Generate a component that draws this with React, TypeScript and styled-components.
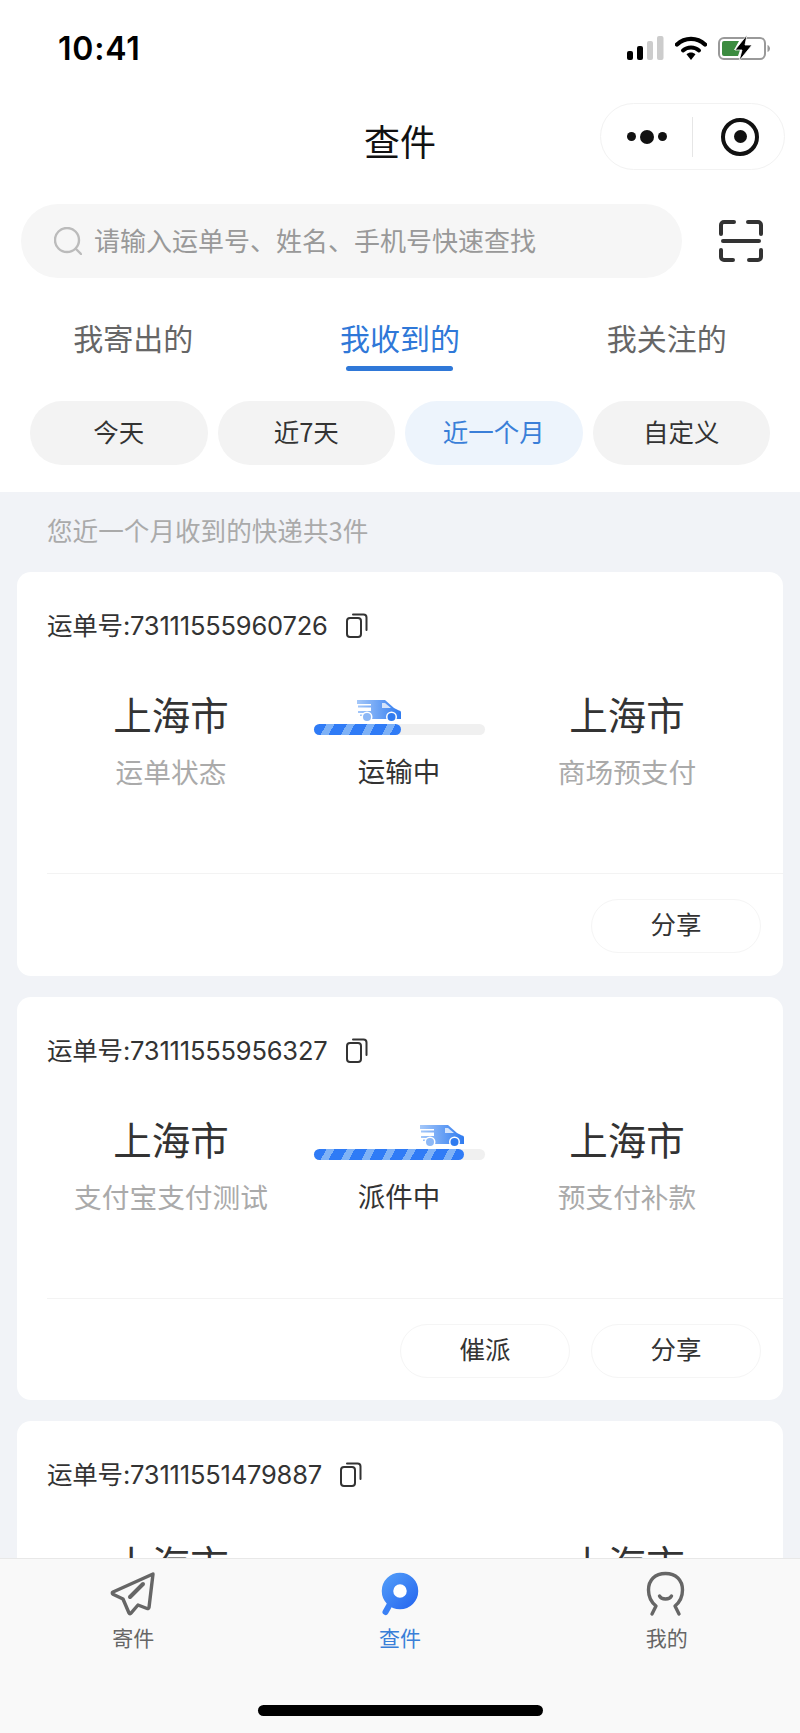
import React from "react";
import styled, { createGlobalStyle } from "styled-components";

interface Waybill {
  no: string;
  from: string;
  fromNote?: string;
  to: string;
  toNote?: string;
  status?: string;
  progress?: number;
  actions?: string[];
}

const waybills: Waybill[] = [
  {
    no: "73111555960726",
    from: "上海市",
    fromNote: "运单状态",
    to: "上海市",
    toNote: "商场预支付",
    status: "运输中",
    progress: 51,
    actions: ["分享"],
  },
  {
    no: "73111555956327",
    from: "上海市",
    fromNote: "支付宝支付测试",
    to: "上海市",
    toNote: "预支付补款",
    status: "派件中",
    progress: 88,
    actions: ["催派", "分享"],
  },
  { no: "73111551479887", from: "上海市", to: "上海市" },
];

const ranges = ["今天", "近7天", "近一个月", "自定义"];
const tabs = ["我寄出的", "我收到的", "我关注的"];

const SignalIcon = () => (
  <svg width="37" height="24" viewBox="0 0 37 24">
    <rect x="0" y="15" width="6" height="9" rx="2" fill="#000" />
    <rect x="10" y="10" width="6" height="14" rx="2" fill="#000" />
    <rect x="20" y="5" width="6" height="19" rx="2" fill="#ccc" />
    <rect x="30" y="0" width="6.5" height="24" rx="2" fill="#ccc" />
  </svg>
);

const WifiIcon = () => (
  <svg width="32" height="24" viewBox="0 0 32 24" fill="none">
    <path d="M2 8.5C10 1 22 1 30 8.5" stroke="#000" strokeWidth="4.4" strokeLinecap="round" />
    <path d="M8 14.5C12.5 10.5 19.5 10.5 24 14.5" stroke="#000" strokeWidth="4" strokeLinecap="round" />
    <path d="M11.5 18.2C14.2 15.8 17.8 15.8 20.5 18.2L16 24Z" fill="#000" />
  </svg>
);

const BatteryIcon = () => (
  <svg width="52" height="26" viewBox="0 0 52 26" fill="none">
    <rect x="1" y="3" width="46" height="21" rx="5" stroke="#999" strokeWidth="2" />
    <path d="M4 8a2 2 0 0 1 2-2h15l-5 9h6l-2 6H6a2 2 0 0 1-2-2Z" fill="#3c8c40" />
    <path d="M49.5 10c1.5.5 2.5 2 2.5 3.5s-1 3-2.5 3.5Z" fill="#999" />
    <path d="M29 0 17 15h7l-3 11 13-16h-7Z" fill="#000" stroke="#fff" strokeWidth=".8" />
  </svg>
);

const ScanIcon = () => (
  <svg width="44" height="42" viewBox="0 0 44 42" fill="none" stroke="#333" strokeWidth="4" strokeLinecap="round">
    <path d="M2 14V5a3 3 0 0 1 3-3h10" />
    <path d="M29 2h10a3 3 0 0 1 3 3v9" />
    <path d="M4 21h36" />
    <path d="M2 30v7a3 3 0 0 0 3 3h9" />
    <path d="M30 40h9a3 3 0 0 0 3-3v-7" />
  </svg>
);

const SearchIcon = () => (
  <svg width="28" height="28" viewBox="0 0 28 28" fill="none" stroke="#bbb" strokeWidth="2.4" strokeLinecap="round">
    <circle cx="13" cy="13" r="12" />
    <path d="M22 22l5 5" />
  </svg>
);

const CopyIcon = () => (
  <svg width="22" height="26" viewBox="0 0 22 26" fill="none" stroke="#333" strokeWidth="2">
    <rect x="1" y="6" width="14" height="19" rx="3" />
    <path d="M7 2.5h10.5a3 3 0 0 1 3 3V18" strokeLinecap="round" />
  </svg>
);

const TruckIcon = () => (
  <svg width="44" height="22" viewBox="0 0 44 22">
    <defs>
      <linearGradient id="truckFill" x1="0" x2="1" y1="0" y2="0">
        <stop offset="0" stopColor="#a5c8f9" />
        <stop offset="1" stopColor="#2f7bf0" />
      </linearGradient>
    </defs>
    <path
      d="M0 0h28l9 8 5 2.500a2 2 0 0 1 2 2V19H8v-3H3v-1.500h10V13H1V11h13V7.500H1V5.500h13V4H0Z"
      fill="url(#truckFill)"
    />
    <path d="M28 3h-3v5h9Z" fill="#d3e3fb" />
    <circle cx="10" cy="17" r="5.500" fill="#fff" />
    <circle cx="10" cy="17" r="4" fill="#8db8f6" />
    <circle cx="34.500" cy="17" r="5.500" fill="#fff" />
    <circle cx="34.500" cy="17" r="4" fill="#2f7bf0" />
  </svg>
);

const PlaneIcon = () => (
  <svg width="46" height="48" viewBox="0 0 46 48" fill="none" stroke="#666" strokeWidth="3.400" strokeLinejoin="round" strokeLinecap="round">
    <path d="M43 4 3 22c-1 .6-1 1.600 0 2.200L13 29l6 14c.5 1 1.500 1 2 .2L28 35l9 3.500c1 .4 1.800 0 2-1Z" />
    <path d="M20 27 33 14" strokeWidth="4" />
  </svg>
);

const FindIcon = () => (
  <svg width="40" height="46" viewBox="0 0 40 46" fill="none">
    <defs>
      <linearGradient id="findFill" x1="0" x2="1" y1="0" y2="1">
        <stop offset="0" stopColor="#4d97f8" />
        <stop offset="1" stopColor="#2b6df0" />
      </linearGradient>
    </defs>
    <path d="M10 33 5.500 41" stroke="#3a80f5" strokeWidth="6" strokeLinecap="round" />
    <circle cx="20" cy="20" r="12" fill="#fff" />
    <circle cx="20" cy="20" r="12.500" stroke="url(#findFill)" strokeWidth="11.500" />
  </svg>
);

const MineIcon = () => (
  <svg width="44" height="46" viewBox="0 0 44 46" fill="none" stroke="#666" strokeWidth="3.400" strokeLinecap="round" strokeLinejoin="round">
    <path d="M7 43l4-8C6 31 3.500 26 3.500 19 3.500 9 10 2.500 20.500 2.500S37.500 9 37.500 19c0 7-2.500 12-7.500 16l4 8" />
    <path d="M14.500 25c2 4 10 4 12 0" />
  </svg>
);

const App: React.FC = () => {
  return (
    <Page>
      <GlobalStyle />
      <StatusBar>
        <Time>10:41</Time>
        <StatusIcons>
          <SignalIcon />
          <WifiIcon />
          <BatteryIcon />
        </StatusIcons>
      </StatusBar>

      <NavBar>
        <Title>查件</Title>
        <Capsule>
          <Dots>
            <Dot />
            <Dot $big />
            <Dot />
          </Dots>
          <CapsuleLine />
          <Target />
        </Capsule>
      </NavBar>

      <SearchRow>
        <SearchBox>
          <SearchIcon />
          <Placeholder>请输入运单号、姓名、手机号快速查找</Placeholder>
        </SearchBox>
        <ScanIcon />
      </SearchRow>

      <Tabs>
        {tabs.map((tab, index) => (
          <Tab key={tab} $active={index === 1}>
            {tab}
          </Tab>
        ))}
      </Tabs>

      <Ranges>
        {ranges.map((range, index) => (
          <Range key={range} $active={index === 2}>
            {range}
          </Range>
        ))}
      </Ranges>

      <Feed>
        <Summary>您近一个月收到的快递共3件</Summary>
        <CardList>
          {waybills.map((item) => (
            <Card key={item.no}>
              <CardHead>
                <WaybillNo>运单号:{item.no}</WaybillNo>
                <CopyIcon />
              </CardHead>
              <Route>
                <Place>
                  <City>{item.from}</City>
                  {item.fromNote && <Note>{item.fromNote}</Note>}
                </Place>
                <Transit>
                  {item.progress !== undefined && (
                    <>
                      <Track>
                        <Fill style={{ width: `${item.progress}%` }}>
                          <TruckSpot>
                            <TruckIcon />
                          </TruckSpot>
                        </Fill>
                      </Track>
                      <Status>{item.status}</Status>
                    </>
                  )}
                </Transit>
                <Place>
                  <City>{item.to}</City>
                  {item.toNote && <Note>{item.toNote}</Note>}
                </Place>
              </Route>
              {item.actions && (
                <CardFoot>
                  {item.actions.map((action) => (
                    <ActionButton key={action}>{action}</ActionButton>
                  ))}
                </CardFoot>
              )}
            </Card>
          ))}
        </CardList>
      </Feed>

      <TabBar>
        <TabBarItems>
          <BarItem>
            <BarIcon>
              <PlaneIcon />
            </BarIcon>
            寄件
          </BarItem>
          <BarItem $active>
            <BarIcon>
              <FindIcon />
            </BarIcon>
            查件
          </BarItem>
          <BarItem>
            <BarIcon>
              <MineIcon />
            </BarIcon>
            我的
          </BarItem>
        </TabBarItems>
        <HomeIndicator />
      </TabBar>
    </Page>
  );
};

export default App;

const GlobalStyle = createGlobalStyle`
  body {
    margin: 0;
    background: #fff;
    font-family: "Noto Sans CJK SC", "Noto Sans", sans-serif;
  }
`;

const Page = styled.div`
  width: 800px;
  height: 1733px;
  display: flex;
  flex-direction: column;
  overflow: hidden;
  background: #fff;
`;

const StatusBar = styled.div`
  height: 96px;
  flex: none;
  display: flex;
  align-items: center;
  justify-content: space-between;
  padding: 0 30px 0 58px;
`;

const Time = styled.span`
  font-family: Inter, sans-serif;
  font-size: 32px;
  font-weight: 600;
  letter-spacing: 0.8px;
  color: #000;
`;

const StatusIcons = styled.div`
  display: flex;
  align-items: center;
  gap: 11px;
`;

const NavBar = styled.div`
  height: 90px;
  flex: none;
  display: grid;
  grid-template-columns: 1fr auto 1fr;
  align-items: center;
`;

const Title = styled.h1`
  grid-column: 2;
  margin: 0 0 2px;
  font-size: 36px;
  font-weight: 400;
  line-height: 50px;
  color: #111;
`;

const Capsule = styled.div`
  grid-column: 3;
  justify-self: end;
  width: 185px;
  height: 67px;
  box-sizing: border-box;
  margin: 0 15px 9px 0;
  padding: 0 25px 0 26px;
  display: flex;
  align-items: center;
  justify-content: space-between;
  border: 1px solid #f2f2f2;
  border-radius: 34px;
`;

const Dots = styled.div`
  display: flex;
  align-items: center;
  gap: 4px;
`;

const Dot = styled.i<{ $big?: boolean }>`
  width: ${(p) => (p.$big ? 14 : 9)}px;
  height: ${(p) => (p.$big ? 14 : 9)}px;
  border-radius: 50%;
  background: #111;
`;

const CapsuleLine = styled.i`
  width: 1px;
  height: 40px;
  margin-left: 24px;
  background: #e6e6e6;
`;

const Target = styled.i`
  width: 38px;
  height: 38px;
  box-sizing: border-box;
  margin-left: 27px;
  border: 4px solid #111;
  border-radius: 50%;
  display: flex;
  align-items: center;
  justify-content: center;

  &::after {
    content: "";
    width: 13px;
    height: 13px;
    border-radius: 50%;
    background: #111;
  }
`;

const SearchRow = styled.div`
  flex: none;
  display: flex;
  align-items: center;
  gap: 37px;
  margin-top: 18px;
  padding: 0 21px;
`;

const SearchBox = styled.div`
  width: 661px;
  height: 74px;
  box-sizing: border-box;
  padding-left: 33px;
  display: flex;
  align-items: center;
  gap: 12px;
  background: #f6f6f6;
  border-radius: 37px;
`;

const Placeholder = styled.span`
  padding-bottom: 3px;
  font-size: 26px;
  color: #999;
`;

const Tabs = styled.div`
  flex: none;
  display: grid;
  grid-template-columns: repeat(3, 1fr);
  margin-top: 39px;
`;

const Tab = styled.div<{ $active?: boolean }>`
  text-align: center;
  font-size: 30px;
  line-height: 40px;
  color: ${(p) => (p.$active ? "#2f78d8" : "#666")};

  &::after {
    content: "";
    display: ${(p) => (p.$active ? "block" : "none")};
    width: 107px;
    height: 5px;
    margin: 9px auto 0;
    background: #2f78d8;
    border-radius: 3px;
  }
`;

const Ranges = styled.div`
  flex: none;
  display: grid;
  grid-template-columns: repeat(4, 1fr);
  gap: 10px;
  height: 64px;
  margin-top: 30px;
  padding: 0 30px;
`;

const Range = styled.div<{ $active?: boolean }>`
  padding-bottom: 6px;
  box-sizing: border-box;
  display: flex;
  align-items: center;
  justify-content: center;
  font-size: 25.500px;
  color: ${(p) => (p.$active ? "#3a7fd8" : "#333")};
  background: ${(p) => (p.$active ? "#edf4fc" : "#f3f3f3")};
  border-radius: 32px;
`;

const Feed = styled.div`
  flex: 1;
  min-height: 0;
  margin-top: 27px;
  padding: 0 17px;
  overflow: hidden;
  background: #f1f3f7;
`;

const Summary = styled.div`
  height: 80px;
  box-sizing: border-box;
  padding: 0 0 6px 30px;
  display: flex;
  align-items: center;
  font-size: 25.600px;
  color: #aaa;
`;

const CardList = styled.div`
  display: flex;
  flex-direction: column;
  gap: 21px;
`;

const Card = styled.div`
  background: #fff;
  border-radius: 14px;
`;

const CardHead = styled.div`
  height: 106px;
  padding-left: 30px;
  display: flex;
  align-items: center;
  gap: 18px;
`;

const WaybillNo = styled.span`
  padding-bottom: 3px;
  font-family: Inter, "Noto Sans CJK SC", sans-serif;
  font-size: 25.500px;
  letter-spacing: -0.2px;
  color: #333;
`;

const Route = styled.div`
  display: grid;
  grid-template-columns: 270px 186px 270px;
  height: 195px;
  box-sizing: border-box;
  padding: 10px 21px 0 19px;
`;

const Place = styled.div`
  text-align: center;
`;

const City = styled.div`
  font-size: 38.500px;
  line-height: 50px;
  color: #333;
`;

const Note = styled.div`
  margin-top: 13px;
  font-size: 27.700px;
  line-height: 40px;
  color: #aaa;
`;

const Transit = styled.div`
  padding-top: 36px;
  text-align: center;
`;

const Track = styled.div`
  width: 171px;
  height: 11px;
  margin: 0 auto;
  background: #f0f0f0;
  border-radius: 6px;
`;

const Fill = styled.div`
  position: relative;
  height: 100%;
  border-radius: 6px;
  background: repeating-linear-gradient(118deg, #2f7bf6 0 11px, #7fb2f6 11px 18px);
`;

const TruckSpot = styled.div`
  position: absolute;
  right: 0;
  bottom: calc(100% + 2px);
  display: flex;
`;

const Status = styled.div`
  margin-top: 15px;
  font-size: 27.500px;
  line-height: 40px;
  color: #333;
`;

const CardFoot = styled.div`
  margin-left: 30px;
  padding: 25px 22px 22.500px 0;
  display: flex;
  justify-content: flex-end;
  gap: 21px;
  border-top: 1px solid #f3f3f3;
`;

const ActionButton = styled.div`
  width: 170px;
  height: 54px;
  box-sizing: border-box;
  padding-bottom: 7px;
  display: flex;
  align-items: center;
  justify-content: center;
  font-size: 25.500px;
  color: #333;
  border: 1px solid #f5f5f5;
  border-radius: 27px;
`;

const TabBar = styled.div`
  height: 175px;
  flex: none;
  box-sizing: border-box;
  display: flex;
  flex-direction: column;
  align-items: center;
  background: #f9f9f9;
  border-top: 1px solid #e8e8e8;
`;

const TabBarItems = styled.div`
  width: 100%;
  display: grid;
  grid-template-columns: repeat(3, 1fr);
  padding-top: 11px;
`;

const BarItem = styled.div<{ $active?: boolean }>`
  display: flex;
  flex-direction: column;
  align-items: center;
  font-size: 21px;
  line-height: 30px;
  color: ${(p) => (p.$active ? "#3a7fd8" : "#666")};
`;

const BarIcon = styled.div`
  height: 48px;
  margin-bottom: 4px;
  display: flex;
  align-items: center;
`;

const HomeIndicator = styled.div`
  width: 285px;
  height: 11px;
  margin-top: 53px;
  background: #000;
  border-radius: 6px;
`;
